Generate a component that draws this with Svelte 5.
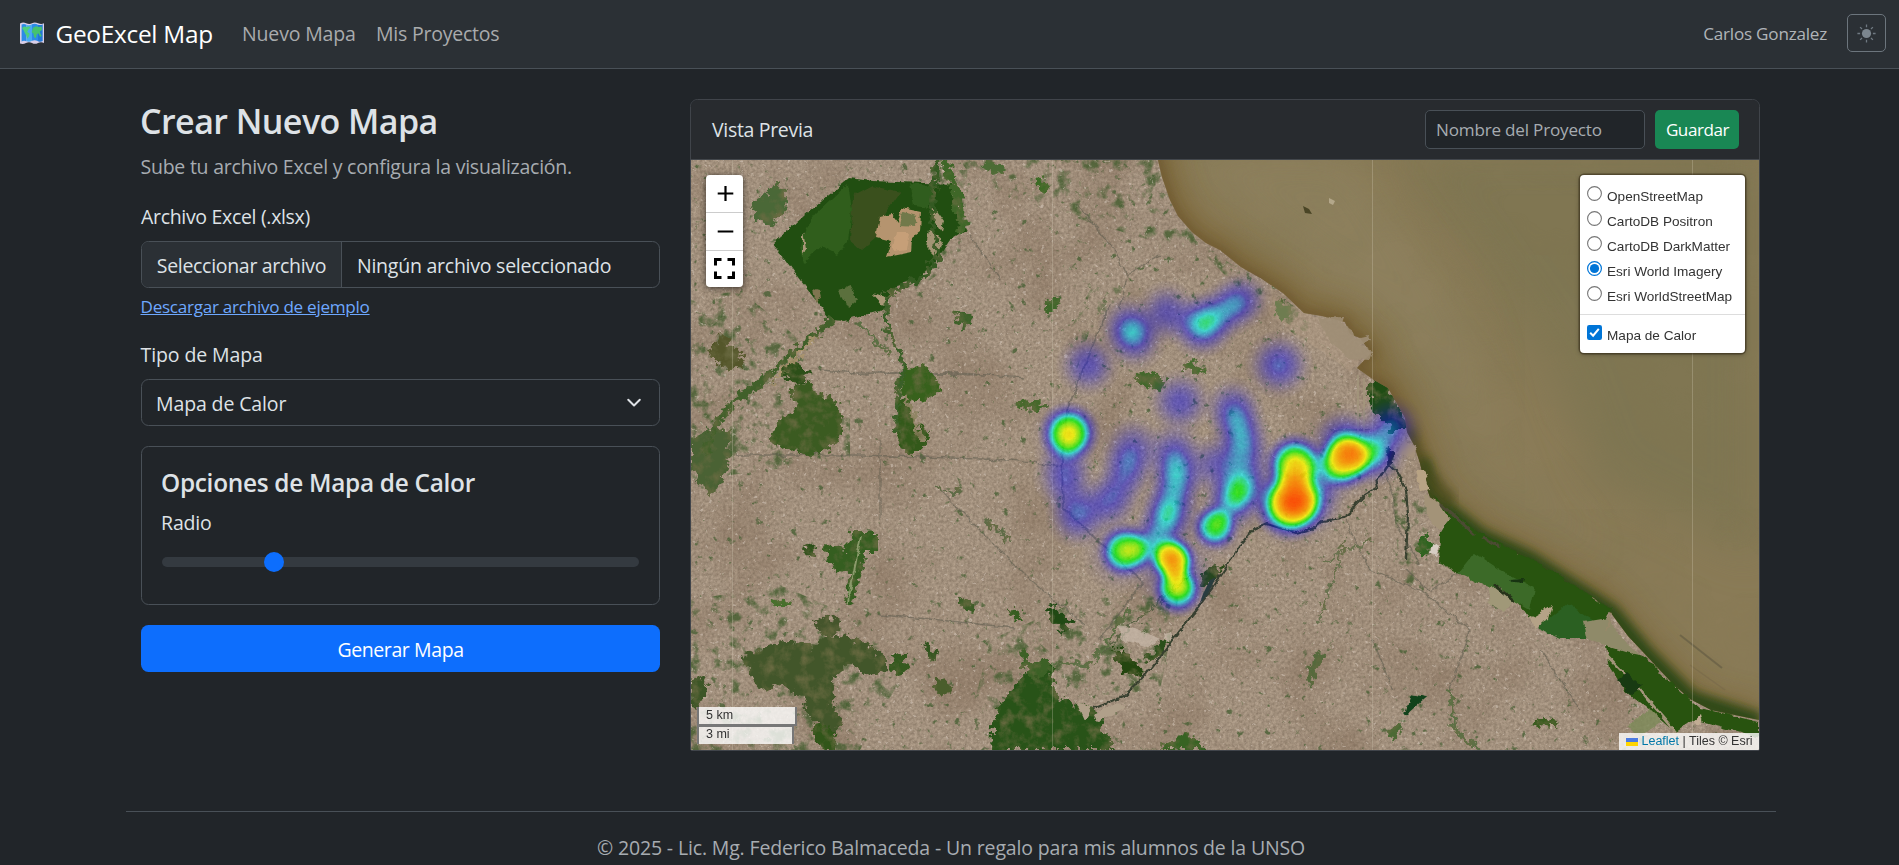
<script>
  let tipo = $state('Mapa de Calor');
  let radio = $state(15);
  let base = $state('Esri World Imagery');
  let calor = $state(true);
  let proyecto = $state('');

  const bases = ['OpenStreetMap', 'CartoDB Positron', 'CartoDB DarkMatter', 'Esri World Imagery', 'Esri WorldStreetMap'];

  // x, y, intensity, radius, flat-topped
  const points = [
    [1130, 327, 0.42, 33], [1135, 339, 0.36, 33], [1167, 313, 0.38, 33],
    [1200, 326, 0.47, 34], [1207, 322, 0.32, 34], [1220, 314, 0.25, 30], [1232, 306, 0.33, 31], [1243, 299, 0.3, 30],
    [1088, 365, 0.4, 33], [1279, 365, 0.45, 35], [1180, 402, 0.4, 34],
    [1069, 433, 0.76, 32, 1], [1069, 433, 0.2, 40], [1065, 477, 0.36, 33], [1065, 457, 0.2, 32], [1070, 498, 0.2, 30], [1078, 517, 0.4, 33], [1110, 500, 0.38, 32],
    [1095, 508, 0.12, 30], [1122, 484, 0.2, 28],
    [1127, 467, 0.38, 32], [1133, 447, 0.32, 33],
    [1233, 408, 0.38, 32], [1238, 425, 0.36, 31], [1243, 441, 0.38, 31], [1243, 458, 0.32, 31], [1242, 472, 0.18, 31], [1217, 465, 0.36, 34],
    [1242, 487, 0.5, 32], [1233, 500, 0.52, 33], [1215, 527, 0.66, 25, 1], [1215, 527, 0.15, 38], [1225, 514, 0.12, 25],
    [1174, 452, 0.36, 33], [1177, 470, 0.36, 32], [1177, 482, 0.32, 31], [1173, 497, 0.3, 31], [1168, 513, 0.52, 32], [1162, 532, 0.38, 32],
    [1125, 551, 0.7, 29, 1], [1122, 553, 0.2, 42], [1147, 547, 0.38, 30], [1160, 552, 0.18, 30],
    [1173, 559, 0.82, 26, 1], [1176, 575, 0.3, 44], [1177, 580, 0.32, 28], [1178, 591, 0.64, 27, 1],
    [1295, 463, 0.77, 32, 1], [1290, 505, 0.87, 38, 1], [1307, 500, 0.5, 36], [1294, 484, 0.3, 32], [1293, 490, 0.28, 60],
    [1344, 461, 0.76, 31, 1], [1359, 452, 0.52, 34], [1343, 440, 0.42, 32], [1376, 454, 0.48, 33], [1391, 428, 0.48, 34], [1324, 474, 0.3, 34], [1347, 452, 0.22, 50]
  ];

  const coast = 'L1158,160 L1162,177 1170,200 1178,216 1192,232 1206,243 1220,250 1241,267 1262,279 1283,293 1304,313 1322,316 1345,322 1350,334 1360,338 1371,353 1357,368 1374,380 1388,388 1396,402 1405,418 1407,432 1414,445 1420,463 1424,480 1430,497 1452,516 1480,537 1505,548 1529,560 1571,587 1594,598 1611,613 1628,636 1644,653 1672,683 1690,699 1711,710 1759,720';

  const greens = [
    ['752,205 776,183 787,195 785,212 770,225 754,220', '#4a6837'],
    ['708,352 722,335 740,352 744,364 728,371', '#54562a'],
    ['780,375 793,360 810,374 798,384', '#2c4f18'],
    ['790,390 805,380 838,405 843,430 834,447 812,456 790,450 770,440 778,420 796,412', '#3b5b21'],
    ['691,440 712,425 730,432 728,468 712,495 697,482 691,465', '#4a6234'],
    ['905,368 925,365 940,382 938,395 915,403 900,395', '#37611c'],
    ['896,398 906,400 914,420 922,428 930,432 925,447 912,457 900,445 895,425', '#33591a'],
    ['823,547 848,549 851,533 878,533 878,553 866,553 853,604 844,603 850,573 836,572', '#355e20'],
    ['801,545 812,547 817,556 810,559', '#2b4f18'],
    ['769,597 782,602 794,600 791,606 775,606', '#47702c'],
    ['741,657 765,647 794,640 812,648 826,635 848,637 870,645 887,660 887,673 865,676 851,663 834,678 832,700 842,722 830,735 812,720 805,700 780,685 760,690', '#42562a'],
    ['812,620 828,616 842,622 838,632 824,637', '#45552c'],
    ['691,680 702,676 708,688 700,705 691,708', '#3c5526'],
    ['893,654 908,652 906,670 897,676 890,668', '#35591f'],
    ['923,640 930,643 938,656 932,660 924,650', '#33541f'],
    ['935,676 946,680 951,692 943,697 935,688', '#4a5d2c'],
    ['812,728 824,725 838,738 834,750 818,748', '#315519'],
    ['998,707 1008,694 1023,677 1040,668 1051,663 1055,693 1070,703 1094,707 1104,730 1116,750 991,750 992,730', '#285318'],
    ['1053,605 1073,622 1064,632 1050,620 1048,608', '#204914'],
    ['1008,608 1016,607 1022,618 1016,622', '#355d20'],
    ['960,597 968,600 976,610 967,615 960,606', '#3c5c26'],
    ['1020,650 1032,660 1050,662 1050,672 1036,680 1022,664', '#3c6126'],
    ['1112,650 1125,650 1144,672 1137,677 1122,670', '#23450f'],
    ['1142,660 1152,651 1162,640 1170,640 1162,654 1152,662', '#2a4f1a'],
    ['1160,750 1168,742 1185,733 1196,738 1206,750', '#376323'],
    ['1366,385 1376,380 1389,386 1396,402 1405,418 1406,430 1390,430 1378,415 1370,404', '#1f4c14'],
    ['1417,540 1428,532 1431,545 1424,556 1416,552', '#2f6420'],
    ['1133,378 1148,370 1158,378 1168,380 1160,388 1140,384', '#44682c'],
    ['1180,367 1190,361 1207,370 1196,374', '#4a6c31'],
    ['1017,402 1034,401 1050,405 1038,410 1020,408', '#44692a'],
    ['1046,303 1054,297 1062,297 1056,308 1046,314', '#40672a'],
    ['957,310 970,311 971,325 963,330 956,320', '#3d6129'],
    ['1035,180 1043,178 1048,188 1042,193', '#3b6b24'],
    ['980,164 1000,162 1004,172 992,174', '#4c6c35'],
    ['1278,300 1290,308 1288,320 1272,312', '#4a6c35'],
    ['1205,570 1216,564 1222,570 1214,582 1200,590', '#274818'],
    ['1529,723 1540,717 1560,722 1556,729', '#3a5c1f'],
    ['1402,725 1400,733 1392,743 1388,730', '#4c6a35'],
    ['1314,655 1320,651 1325,657 1318,668 1310,690 1307,680', '#55693c']
  ];
  const coastal = [
    ['1432,496 1455,514 1480,534 1529,557 1571,584 1611,609 1603,625 1581,636 1556,630 1529,617 1518,603 1490,585 1458,573 1439,563 1440,535 1450,518', '#28540f'],
    ['1458,573 1474,553 1500,570 1535,588 1530,610 1505,596', '#3c6a28'],
    ['1537,628 1568,604 1600,625 1590,638 1560,638', '#2b6022'],
    ['1606,646 1618,646 1645,657 1672,684 1700,708 1759,722 1759,738 1694,720 1676,732 1650,710 1625,690 1610,668', '#28530f']
  ];
</script>

<svelte:head><title>GeoExcel Map</title></svelte:head>

<div class="page">
  <nav class="navbar">
    <a class="brand" href="#inicio">
      <svg width="26" height="24" viewBox="0 0 26 24" aria-hidden="true">
        <path d="M1 2.500Q4 .6 7.200 2.200T13 2.200T19 2.200T25 2.200V22Q22 20.300 19 22T13 22T7 22T1 22.500Z" fill="#d9cfe8" />
        <path d="M2.600 3.500Q5 2.200 7.400 3.700V20.300Q5 19 2.600 20.500Z" fill="#2d8be6" />
        <path d="M7.400 3.700Q10.500 5 13 3.200V19.800Q10.500 21.500 7.400 20.300Z" fill="#49a9f2" />
        <path d="M13 3.200Q16 1.900 19 3.700V20.300Q16 18.700 13 19.800Z" fill="#2d8be6" />
        <path d="M19 3.700Q21.500 4.700 23.700 3.200V20Q21.500 21.500 19 20.300Z" fill="#2378d4" />
        <path d="M3 7l2-1.500 3 .6 2-.8 1.600 1.500-2 1.500-1.400 2.600 2.400 1.700-.6 2.900-1.700 2.300-1-3.300L6 12.600 4.700 9.500z" fill="#4fce7d" />
        <path d="M14 6.800l3-1.500 3 .8 2.700-.6.3 3.500-2.200 1.400.8 2.600 1.200 2-1.700.8-1.800-3.500-1.500 1-1 3.900-1.700-1.100-.7-3.600-1.700-1.200z" fill="#45c26f" />
      </svg>
      <span>GeoExcel Map</span>
    </a>
    <a class="link nuevo" href="#nuevo">Nuevo Mapa</a>
    <a class="link mis" href="#proyectos">Mis Proyectos</a>
    <span class="user">Carlos Gonzalez</span>
    <button class="theme" aria-label="Cambiar tema">
      <svg width="19" height="19" viewBox="0 0 19 19" aria-hidden="true">
        <circle cx="9.500" cy="9.500" r="4.600" fill="#7b858e" />
        <path d="M9.500.6v2.700M9.500 15.700v2.700M.4 9.500h2.700M15.900 9.500h2.700M3.100 3.100l1.900 1.900M14 14l1.900 1.900M3.100 15.900L5 14M14 5l1.900-1.900" stroke="#6f7982" stroke-width="1.300" />
      </svg>
    </button>
  </nav>

  <div class="container">
    <main class="row">
      <section class="form">
        <h2>Crear Nuevo Mapa</h2>
        <p class="lead">Sube tu archivo Excel y configura la visualización.</p>
        <div class="label archivo">Archivo Excel (.xlsx)</div>
        <div class="control file">
          <button class="pick">Seleccionar archivo</button>
          <span class="none">Ningún archivo seleccionado</span>
        </div>
        <a class="sample" href="#ejemplo">Descargar archivo de ejemplo</a>
        <div class="label tipo">Tipo de Mapa</div>
        <div class="control select">
          <span>{tipo}</span>
          <svg width="20" height="20" viewBox="0 0 16 16" aria-hidden="true">
            <path d="m2.500 5 5.500 5.500L13.500 5" transform="translate(1.300 1.200) scale(.84)" fill="none" stroke="#dee2e6" stroke-width="1.900" stroke-linecap="round" stroke-linejoin="round" />
          </svg>
        </div>
        <div class="options">
          <h5>Opciones de Mapa de Calor</h5>
          <div class="label radio">Radio</div>
          <input class="range" type="range" min="5" max="50" bind:value={radio} aria-label="Radio" />
        </div>
        <button class="generate">Generar Mapa</button>
      </section>

      <section class="card">
        <header>
          <span class="vista">Vista Previa</span>
          <input class="name" placeholder="Nombre del Proyecto" bind:value={proyecto} />
          <button class="save">Guardar</button>
        </header>
        <div class="map">
          <svg class="tiles" width="1068" height="590" viewBox="691 160 1068 590" aria-hidden="true">
            <defs>
              <filter id="land" x="0" y="0" width="100%" height="100%" color-interpolation-filters="sRGB">
                <feTurbulence type="fractalNoise" baseFrequency=".34" numOctaves="4" seed="4" result="n" />
                <feColorMatrix in="n" values=".23 0 0 0 .520  .22 0 0 0 .455  .21 0 0 0 .385  0 0 0 0 1" />
              </filter>
              <filter id="tint" x="0" y="0" width="100%" height="100%" color-interpolation-filters="sRGB">
                <feTurbulence type="fractalNoise" baseFrequency=".014" numOctaves="5" seed="9" />
                <feColorMatrix values="0 0 0 0 .49  0 0 0 0 .40  0 0 0 0 .32  2.400 0 0 0 -1.080" />
              </filter>
              <filter id="specks" x="0" y="0" width="100%" height="100%" color-interpolation-filters="sRGB">
                <feTurbulence type="fractalNoise" baseFrequency=".11" numOctaves="5" seed="21" />
                <feColorMatrix values="0 0 0 0 .29  0 0 0 0 .38  0 0 0 0 .21  8 0 0 0 -5.500" />
                <feComposite in2="SourceGraphic" operator="in" />
              </filter>
              <filter id="dense" x="0" y="0" width="100%" height="100%" color-interpolation-filters="sRGB">
                <feTurbulence type="fractalNoise" baseFrequency=".07" numOctaves="6" seed="33" />
                <feColorMatrix values="0 0 0 0 .27  0 0 0 0 .37  0 0 0 0 .19  4.500 0 0 0 -2.450" />
                <feComposite in2="SourceGraphic" operator="in" />
              </filter>
              <filter id="roofs" x="0" y="0" width="100%" height="100%" color-interpolation-filters="sRGB">
                <feTurbulence type="fractalNoise" baseFrequency=".22" numOctaves="4" seed="14" />
                <feColorMatrix values="0 0 0 0 .84  0 0 0 0 .79  0 0 0 0 .74  0 9 0 0 -6.200" />
              </filter>
              <filter id="rough" x="-10%" y="-10%" width="120%" height="120%" color-interpolation-filters="sRGB">
                <feTurbulence type="fractalNoise" baseFrequency=".14" numOctaves="4" seed="7" result="n" />
                <feDisplacementMap in="SourceGraphic" in2="n" scale="15" xChannelSelector="R" yChannelSelector="G" result="d0" />
                <feGaussianBlur in="d0" stdDeviation=".7" result="d" />
                <feTurbulence type="fractalNoise" baseFrequency=".08" numOctaves="5" seed="3" result="g" />
                <feColorMatrix in="g" values="0 0 0 0 .42  0 0 0 0 .42  0 0 0 0 .26  2.400 0 0 0 -1.080" result="m" />
                <feComposite in="m" in2="d" operator="in" result="mm" />
                <feMerge><feMergeNode in="d" /><feMergeNode in="mm" /></feMerge>
              </filter>
              <filter id="wobble" x="-10%" y="-10%" width="120%" height="120%" color-interpolation-filters="sRGB">
                <feTurbulence type="fractalNoise" baseFrequency=".1" numOctaves="4" seed="5" />
                <feDisplacementMap in="SourceGraphic" scale="6" xChannelSelector="R" yChannelSelector="G" />
                <feGaussianBlur stdDeviation=".5" />
              </filter>
              <filter id="silt" x="0" y="0" width="100%" height="100%" color-interpolation-filters="sRGB">
                <feTurbulence type="fractalNoise" baseFrequency=".009 .012" numOctaves="4" seed="12" />
                <feColorMatrix values="0 0 0 0 .46  0 0 0 0 .45  0 0 0 0 .30  1.800 0 0 0 -.62" />
              </filter>
              <filter id="soft18" x="-20%" y="-20%" width="140%" height="140%"><feGaussianBlur stdDeviation="14" /></filter>
              <filter id="soft5" x="-20%" y="-20%" width="140%" height="140%"><feGaussianBlur stdDeviation="5" /></filter>
              <filter id="soft30" x="-50%" y="-50%" width="200%" height="200%"><feGaussianBlur stdDeviation="22" /></filter>
              <filter id="heat" filterUnits="userSpaceOnUse" x="1010" y="250" width="440" height="400" color-interpolation-filters="sRGB">
                <feColorMatrix values="0 0 0 1 0  0 0 0 1 0  0 0 0 1 0  0 0 0 1 0" />
                <feComponentTransfer>
                  <feFuncR type="table" tableValues="0 0 0 0 0 0 0 0 1 1 1" />
                  <feFuncG type="table" tableValues="0 0 0 0 0 .5 1 1 1 .5 0" />
                  <feFuncB type="table" tableValues="1 1 1 1 1 1 1 0 0 0 0" />
                </feComponentTransfer>
              </filter>
              <radialGradient id="spot">
                <stop offset="0" stop-color="#000" stop-opacity="1" />
                <stop offset=".2" stop-color="#000" stop-opacity=".92" />
                <stop offset=".4" stop-color="#000" stop-opacity=".68" />
                <stop offset=".6" stop-color="#000" stop-opacity=".36" />
                <stop offset=".8" stop-color="#000" stop-opacity=".11" />
                <stop offset="1" stop-color="#000" stop-opacity="0" />
              </radialGradient>
              <radialGradient id="core">
                <stop offset="0" stop-color="#000" stop-opacity="1" />
                <stop offset=".15" stop-color="#000" stop-opacity=".98" />
                <stop offset=".3" stop-color="#000" stop-opacity=".92" />
                <stop offset=".45" stop-color="#000" stop-opacity=".82" />
                <stop offset=".6" stop-color="#000" stop-opacity=".62" />
                <stop offset=".75" stop-color="#000" stop-opacity=".33" />
                <stop offset=".88" stop-color="#000" stop-opacity=".11" />
                <stop offset="1" stop-color="#000" stop-opacity="0" />
              </radialGradient>
              <clipPath id="river"><path d={'M1158,150 ' + coast + ' L1770,720 1770,150Z'} /></clipPath>
            </defs>

            <rect x="691" y="160" width="1068" height="590" filter="url(#land)" />
            <rect x="691" y="160" width="1068" height="590" filter="url(#tint)" opacity=".42" />
            <path d="M691 160H1160L1290 300 1370 400 1440 570 1640 700 1759 750H691Z" filter="url(#specks)" opacity=".8" />
            <path d="M691 300L740 290 800 340 780 400 850 400 850 460 691 480ZM691 600L780 585 860 620 900 680 860 750 691 750ZM960 160H1160L1200 250 1150 240 980 190ZM1080 600L1180 590 1160 690 1050 700 970 720 990 640ZM1180 230L1300 310 1370 400 1330 350 1250 300ZM1100 270L1125 290 1090 330 1070 390 1070 330ZM1390 460L1430 500 1440 600 1400 580ZM930 170L970 170 960 260 900 300 930 250Z" filter="url(#dense)" opacity=".8" />
            <rect x="691" y="160" width="1068" height="590" filter="url(#roofs)" opacity=".5" />

            <g fill="none" stroke="#5c5a4c" stroke-width="1.300" opacity=".55" filter="url(#wobble)">
              <path d="M1110 303L1067 410 1062 457 1063 507 1100 543 1143 582 1100 640" stroke-width="1.800" />
              <path d="M735 455H860L1010 460 1062 467M860 372L960 373 1025 378M875 373L985 375" />
              <path d="M940 490L980 530 1030 580 1085 625M880 615L940 620 1015 628M880 440L880 520" />
              <path d="M1078 205L1115 250 1126 275 1120 310M970 235L1000 280M1126 275L1160 255M820 370L870 374" />
              <path d="M1330 430H1370M1345 520L1370 570 1420 590 1470 630 1450 690M1405 568L1430 592 1480 560" />
              <path d="M1384 470L1394 500 1394 520 1420 565M1372 640L1394 690M1540 650L1580 710" />
            </g>
            <g filter="url(#rough)">
              {#each greens as [pts, color]}
                <polygon points={pts} fill={color} />
              {/each}
            </g>
            <g filter="url(#wobble)">
              <path d="M849 178L872 181 952 184 954 205 966 230 950 240 935 262 918 280 895 287 890 296 883 310 845 321 831 320 800 280 773 243 803 217Z" fill="#214e11" />
              <path d="M800 246L806 228 816 214 848 184 852 210 848 242 838 254 822 246 804 262Z" fill="#33621f" opacity=".85" />
              <path d="M853 196L872 186 900 192 886 212 876 238 862 250 850 240Z" fill="#4b5226" opacity=".6" />
              <path d="M910 184L934 186 928 208 915 206Z" fill="#376424" opacity=".7" />
              <path d="M876 237L880 217 892 214 898 222 902 208 921 212 920 232 912 238 911 253 887 258 892 241Z" fill="#b5946f" />
              <path d="M896 232L910 232 907 250 892 252Z" fill="#c69f78" />
              <path d="M903 212L918 216 914 226 900 225Z" fill="#71794a" />
              <path d="M929 230L943 242 936 256 926 246ZM932 205L944 222 942 232 931 215Z" fill="#a39474" />
              <path d="M872 293L886 297 884 306ZM803 256L803 232 806 250Z" fill="#a99878" />
              <path d="M838 290L850 286 858 300 848 308Z" fill="#5b703d" />
              <path d="M813 288L820 290 822 298 815 300Z" fill="#7f7550" />
              <path d="M861 536L848 602" stroke="#8b9a6b" stroke-width="1.800" />
              <path d="M1408 712L1413 696 1423 698 1405 714Z" fill="#12421b" stroke="#12421b" stroke-width="3" />
            </g>
            <g fill="none" filter="url(#rough)" stroke-linecap="round" stroke-linejoin="round">
              <path d="M832 321L806 342 783 362 760 384 735 400 715 425 706 452" stroke="#41602a" stroke-width="6" />
              <path d="M815 338L770 384" stroke="#a9946f" stroke-width="3" />
              <path d="M887 293L886 325 897 345 905 366 898 390 896 430" stroke="#3a5f28" stroke-width="4" />
              <path d="M905 396L922 440" stroke="#918665" stroke-width="4" />
              <path d="M938 160L934 185 932 220 938 255 925 275 890 293" stroke="#345a22" stroke-width="5" />
              <path d="M945 164L956 190 962 228" stroke="#3f6728" stroke-width="8" />
              <path d="M860 325L880 345 890 355" stroke="#5c7044" stroke-width="3" />
              <path d="M1345 540L1338 565 1328 590 1318 625M1325 560L1370 540" stroke="#6a7350" stroke-width="2.500" />
              <path d="M1450 690L1455 730 1480 750M1095 660L1128 610M1053 662L1090 665" stroke="#5d7045" stroke-width="3.500" />
              <path d="M935 488L960 492M1010 540L985 520" stroke="#5f6c47" stroke-width="3" />
              <path d="M1105 650L1190 575" stroke="#596244" stroke-width="2" />
            </g>
            <path d="M1076 702L1092 706 1084 720ZM1095 714L1117 702 1124 708 1098 722Z" fill="#b0a08a" filter="url(#wobble)" />
            <path d="M1118 625L1135 628 1160 640 1145 646 1122 640ZM1164 634L1172 632 1175 640 1165 641Z" fill="#cabbac" opacity=".7" filter="url(#wobble)" />
            <path d="M1256 290L1290 305 1340 330 1366 352 1350 372 1320 350 1270 315Z" fill="#b39c83" opacity=".35" filter="url(#wobble)" />
            <path d="M1358 375V440M1364 378V435M1361 370H1372" stroke="#a3967c" stroke-width="2" opacity=".8" />

            <g clip-path="url(#river)">
              <rect x="1150" y="150" width="620" height="600" fill="#8a7b57" />
              <path d="M1400 150L1470 240 1560 370 1600 480 1759 560V150Z" fill="#7b7551" opacity=".7" filter="url(#soft30)" />
              <path d="M1160 150L1350 150 1470 320 1500 450 1600 560 1500 480 1400 330Z" fill="#8f8260" opacity=".7" filter="url(#soft30)" />
              <rect x="1150" y="150" width="620" height="600" filter="url(#silt)" opacity=".18" />
              <path d={'M1156,140 ' + coast} fill="none" stroke="#78602f" stroke-width="30" opacity=".75" filter="url(#soft18)" />
              <path d={'M1156,140 ' + coast} fill="none" stroke="#66502a" stroke-width="8" opacity=".65" filter="url(#soft5)" />
              <path d="M1420 460L1430 497 1480 537 1529 560 1571 587 1611 613 1644 653 1690 699 1759 722" fill="none" stroke="#2f4a16" stroke-width="18" filter="url(#soft5)" />
              <path d="M1405 430L1420 470 1450 505" fill="none" stroke="#4c4c1e" stroke-width="20" opacity=".7" filter="url(#soft5)" />
              <path d="M1680 635L1722 668" stroke="#6a6146" stroke-width="2" opacity=".8" />
              <path d="M1690 665L1725 690" stroke="#786a4a" stroke-width="1.500" opacity=".6" />
              <path d="M1303 206l6 3 3 5-7-1z" fill="#4a4526" />
              <path d="M1329 198l6 3-2 4-4-2z" fill="#b3a78a" />
            </g>
            <g filter="url(#wobble)">
              <path d="M1318 318l25-1-2 6 12 8 2 7 14-3 2 5-13 6 14 5-3 9-20-2-24-22z" fill="#9f8e75" opacity=".9" />
              {#each coastal as [pts, color]}
                <polygon points={pts} fill={color} />
              {/each}
              <path d="M1425 496L1440 503 1450 520 1440 530 1426 515Z" fill="#a39378" />
              <path d="M1488 589L1500 587 1514 601 1505 612 1490 604Z" fill="#a09878" />
              <path d="M1494 585L1514 601" stroke="#26331a" stroke-width="3" />
              <path d="M1530 618L1552 605 1548 620 1534 628Z" fill="#b5a287" />
              <path d="M1584 622L1608 618 1622 638 1640 655 1625 652 1606 646 1588 640Z" fill="#8f8a69" />
              <path d="M1606 655L1640 690 1676 732" fill="none" stroke="#a3957b" stroke-width="2.500" />
              <path d="M1617 680L1628 673 1642 685 1630 694Z" fill="#183a12" />
              <path d="M1628 726L1650 708 1662 722 1640 736Z" fill="#7c8a58" opacity=".8" />
              <path d="M1692 722L1700 715 1702 724Z" fill="#c1ad94" />
              <path d="M1416 470L1424 470 1430 490 1420 492Z" fill="#b8a384" />
              <path d="M1402 440L1415 445 1413 457 1398 455Z" fill="#a4917c" />
              <path d="M1432 544l7 3-3 9-6-3z" fill="#d7cdc3" />
              <path d="M1611 614L1605 632" stroke="#98896a" stroke-width="2" />
              <path d="M1440 503L1475 535M1482 538L1500 547" stroke="#4c4a33" stroke-width="3" />
              <path d="M1510 580l14-1-2 5-8-1z" fill="#173311" />
            </g>

            <g fill="none" stroke="#38402f" stroke-linejoin="round" filter="url(#wobble)">
              <path d="M1392 460L1385 470 1376 478 1378 487 1366 494 1355 505 1350 513 1343 518 1322 521 1314 528 1296 533 1280 528 1267 524 1253 530 1240 545 1213 587 1173 640 1144 677 1123 697 1094 708" stroke-width="2.200" />
              <path d="M1388 463L1397 472 1406 490 1408 515 1406 560" stroke-width="2.200" />
              <path d="M1386 446L1396 456 1388 466Z" fill="#2b3322" />
            </g>
            <path d="M1203 594L1210 580 1216 577 1208 594 1200 603Z" fill="#2b3f38" />
            <path d="M732.500 160V750M1052.500 160V750M1372.500 160V750M1692.500 160V750" stroke="#d8d0bc" stroke-width="1" opacity=".28" />

            {#if calor}
              <g filter="url(#heat)">
                {#each points as [x, y, v, r, strong]}
                  <circle cx={x} cy={y} r={r} fill={strong ? 'url(#core)' : 'url(#spot)'} opacity={v} />
                {/each}
              </g>
            {/if}
          </svg>

          <div class="zoomer">
            <button aria-label="Acercar"><svg width="17" height="17" viewBox="0 0 17 17"><path d="M8.500 1V16M.7 8.500H16.300" stroke="#000" stroke-width="2.200" /></svg></button>
            <button aria-label="Alejar"><svg width="17" height="17" viewBox="0 0 17 17"><path d="M.7 8.500H16.300" stroke="#000" stroke-width="2.200" /></svg></button>
            <button aria-label="Pantalla completa"><svg width="21" height="21" viewBox="0 0 21 21"><path d="M1.500 7.500V1.500H7.500M13.500 1.500H19.500V7.500M19.500 13.500V19.500H13.500M7.500 19.500H1.500V13.500" fill="none" stroke="#000" stroke-width="3" /></svg></button>
          </div>

          <div class="layers">
            {#each bases as name}
              <button class="layer" onclick={() => (base = name)}>
                <svg width="15" height="15" viewBox="0 0 15 15">
                  {#if base === name}
                    <circle cx="7.500" cy="7.500" r="6.900" fill="#fff" stroke="#0075d7" stroke-width="1.200" />
                    <circle cx="7.500" cy="7.500" r="4.600" fill="#0075d7" />
                  {:else}
                    <circle cx="7.500" cy="7.500" r="6.900" fill="#fff" stroke="#767676" stroke-width="1.100" />
                  {/if}
                </svg>
                <span>{name}</span>
              </button>
            {/each}
            <hr />
            <button class="layer" onclick={() => (calor = !calor)}>
              <svg width="15" height="15" viewBox="0 0 15 15">
                <rect width="15" height="15" rx="2.200" fill="#0075d7" />
                {#if calor}<path d="M3.200 7.800L6.100 10.700 11.800 3.800" fill="none" stroke="#fff" stroke-width="2" />{/if}
              </svg>
              <span>Mapa de Calor</span>
            </button>
          </div>

          <div class="scale">
            <div class="km">5 km</div>
            <div class="mi">3 mi</div>
          </div>

          <div class="credit">
            <svg width="12" height="8" viewBox="0 0 12 8"><path fill="#4c7be1" d="M0 0h12v4H0z" /><path fill="#ffd500" d="M0 4h12v4H0z" /></svg>
            <a href="#leaflet">Leaflet</a><span>| Tiles © Esri</span>
          </div>
        </div>
      </section>
    </main>

    <footer>© 2025 - Lic. Mg. Federico Balmaceda - Un regalo para mis alumnos de la UNSO</footer>
  </div>
</div>

<style>
  :global(body) { background: #212529; }
  .page, .page * { box-sizing: border-box; }
  .page {
    height: 865px;
    overflow: hidden;
    color: #dee2e6;
    font: 19.5px/30px "Open Sans", "Noto Sans", sans-serif;
    white-space: nowrap;
  }
  button, input { font: inherit; letter-spacing: inherit; color: inherit; margin: 0; }
  a { text-decoration: none; }

  .navbar {
    display: flex;
    align-items: center;
    height: 69px;
    padding: 0 13px 2px 19px;
    background: #2b3035;
    border-bottom: 1px solid #495057;
  }
  .navbar span, .link { padding-top: 2px; }
  .brand {
    display: flex;
    align-items: center;
    gap: 10.500px;
    width: 223px;
    color: #fff;
    font-size: 24.4px;
    letter-spacing: -0.28px;
  }
  .link { color: #a9abad; }
  .nuevo { width: 134px; letter-spacing: -0.15px; }
  .mis { letter-spacing: -0.23px; }
  .user { margin-left: auto; font-size: 17.1px; letter-spacing: -0.22px; color: #b0b4b8; }
  .theme {
    display: flex;
    align-items: center;
    justify-content: center;
    width: 39px;
    height: 38px;
    margin-left: 20px;
    background: none;
    border: 1px solid #6c757d;
    border-radius: 5px;
  }

  .container { width: 1650px; margin-left: 126px; }
  .row {
    display: grid;
    grid-template-columns: 519px 1070px;
    column-gap: 30px;
    padding: 30px 15px 0;
  }
  .form { display: flex; flex-direction: column; align-items: stretch; }
  h2 {
    margin: 0 0 10px -1px;
    font-size: 34px;
    line-height: 45px;
    height: 42px;
    font-weight: 600;
    letter-spacing: -0.55px;
  }
  .lead { margin: 1px 0 20px -0.5px; letter-spacing: -0.24px; color: #a7acb1; }
  .label { margin-bottom: 9px; }
  .archivo { letter-spacing: -0.32px; }
  .control {
    display: flex;
    align-items: center;
    height: 47px;
    border: 1px solid #495057;
    border-radius: 7.500px;
    overflow: hidden;
  }
  .pick {
    height: 45px;
    width: 200px;
    padding: 2px 0 0;
    background: #2b3035;
    border: 0;
    border-right: 1px solid #495057;
    letter-spacing: -0.3px;
  }
  .none { margin-left: 15px; padding-top: 2px; letter-spacing: -0.24px; }
  .sample {
    align-self: flex-start;
    margin: 4px 0 18px -0.500px;
    color: #6ea8fe;
    font-size: 17.1px;
    letter-spacing: -0.27px;
    text-decoration: underline;
  }
  .tipo { margin-left: -0.500px; letter-spacing: -0.1px; }
  .select { justify-content: space-between; padding: 0 15px 0 14px; }
  .select span { padding-top: 2px; letter-spacing: -0.12px; }
  .options {
    height: 159px;
    margin: 20px 0;
    padding: 19px 20px 0;
    border: 1px solid #495057;
    border-radius: 7.500px;
  }
  h5 {
    margin: 0 0 9px -1px;
    padding-top: 2px;
    font-size: 24.4px;
    line-height: 30px;
    font-weight: 600;
    letter-spacing: -0.29px;
  }
  .radio { margin-left: -1px; padding-top: 1px; margin-bottom: 9px; letter-spacing: -0.15px; }
  .range {
    display: block;
    width: 477px;
    height: 30px;
    appearance: none;
    background: none;
  }
  .range::-webkit-slider-runnable-track { height: 10px; border-radius: 10px; background: #343a40; }
  .range::-webkit-slider-thumb {
    appearance: none;
    width: 20px;
    height: 20px;
    margin-top: -5px;
    border-radius: 50%;
    background: #0d6efd;
  }
  .generate {
    height: 47px;
    padding: 2px 0 0;
    border: 0;
    border-radius: 7.500px;
    background: #0d6efd;
    color: #fff;
    letter-spacing: -0.4px;
  }

  .card { height: 652px; border: 1px solid #40444a; border-radius: 7.500px 7.500px 2px 2px; overflow: hidden; }
  .card header {
    display: flex;
    align-items: center;
    height: 60px;
    padding: 0 20px;
    background: #282b2f;
    border-bottom: 1px solid #43474c;
  }
  .vista { padding: 1px 0 0 1px; letter-spacing: -0.32px; margin-right: auto; }
  .name {
    width: 220px;
    height: 39px;
    padding: 0 10px;
    background: #212529;
    border: 1px solid #495057;
    border-radius: 5px;
    font-size: 17.1px;
    letter-spacing: -0.2px;
  }
  .name::placeholder { color: #a7acb1; opacity: 1; }
  .save {
    width: 84px;
    height: 39px;
    margin-left: 10px;
    padding: 1px 0 0 1px;
    border: 0;
    border-radius: 5px;
    background: #198754;
    color: #fff;
    font-size: 17.1px;
    letter-spacing: -0.45px;
  }

  .map { position: relative; height: 590px; background: #a08e7b; font-family: "Liberation Sans", Arial, sans-serif; letter-spacing: 0; }
  .tiles { display: block; }
  .zoomer {
    position: absolute;
    left: 15px;
    top: 15px;
    width: 37px;
    border-radius: 4px;
    overflow: hidden;
    box-shadow: 0 1px 6px rgba(0, 0, 0, 0.65);
  }
  .zoomer button {
    display: flex;
    align-items: center;
    justify-content: center;
    width: 37px;
    height: 37px;
    padding: 0 0 0 1px;
    border: 0;
    background: #fff;
  }
  .zoomer button:last-child { padding: 0; }
  .zoomer button + button { height: 37.500px; border-top: 1px solid #ccc; }
  .layers {
    position: absolute;
    left: 889px;
    top: 15px;
    width: 165px;
    height: 178px;
    padding-top: 8px;
    background: #fff;
    border-radius: 4px;
    box-shadow: 0 0 0 1.500px rgba(50, 40, 20, 0.5), 0 1px 5px rgba(0, 0, 0, 0.4);
    color: #333;
  }
  .layer {
    display: flex;
    gap: 5px;
    width: 100%;
    height: 25px;
    padding: 3px 0 0 7px;
    border: 0;
    background: none;
    font-size: 13.600px;
    line-height: 21px;
  }
  .layers hr { margin: 6px 0 7px; border: 0; border-top: 1px solid #ddd; }
  .scale { position: absolute; left: 6px; bottom: 6px; font-size: 12.500px; line-height: 16px; color: #333; }
  .scale div { height: 19px; padding-left: 7px; background: rgba(255, 255, 255, 0.8); border: 2px solid #777; border-top: 0; }
  .km { width: 100px; }
  .scale .mi { width: 97px; height: 19px; margin-top: -1px; border-bottom: 0; border-top: 2px solid #777; line-height: 15px; }
  .credit {
    position: absolute;
    right: 0;
    bottom: 0;
    display: flex;
    align-items: center;
    width: 140px;
    height: 17px;
    padding-left: 7px;
    background: rgba(255, 255, 255, 0.8);
    color: #333;
    font-size: 12.500px;
    line-height: 17px;
  }
  .credit a { margin: 0 3.500px; color: #0078a8; }

  footer {
    margin-top: 60px;
    padding-top: 21px;
    border-top: 1px solid #495057;
    text-align: center;
    color: #a7acb1;
    letter-spacing: -0.15px;
  }
</style>
